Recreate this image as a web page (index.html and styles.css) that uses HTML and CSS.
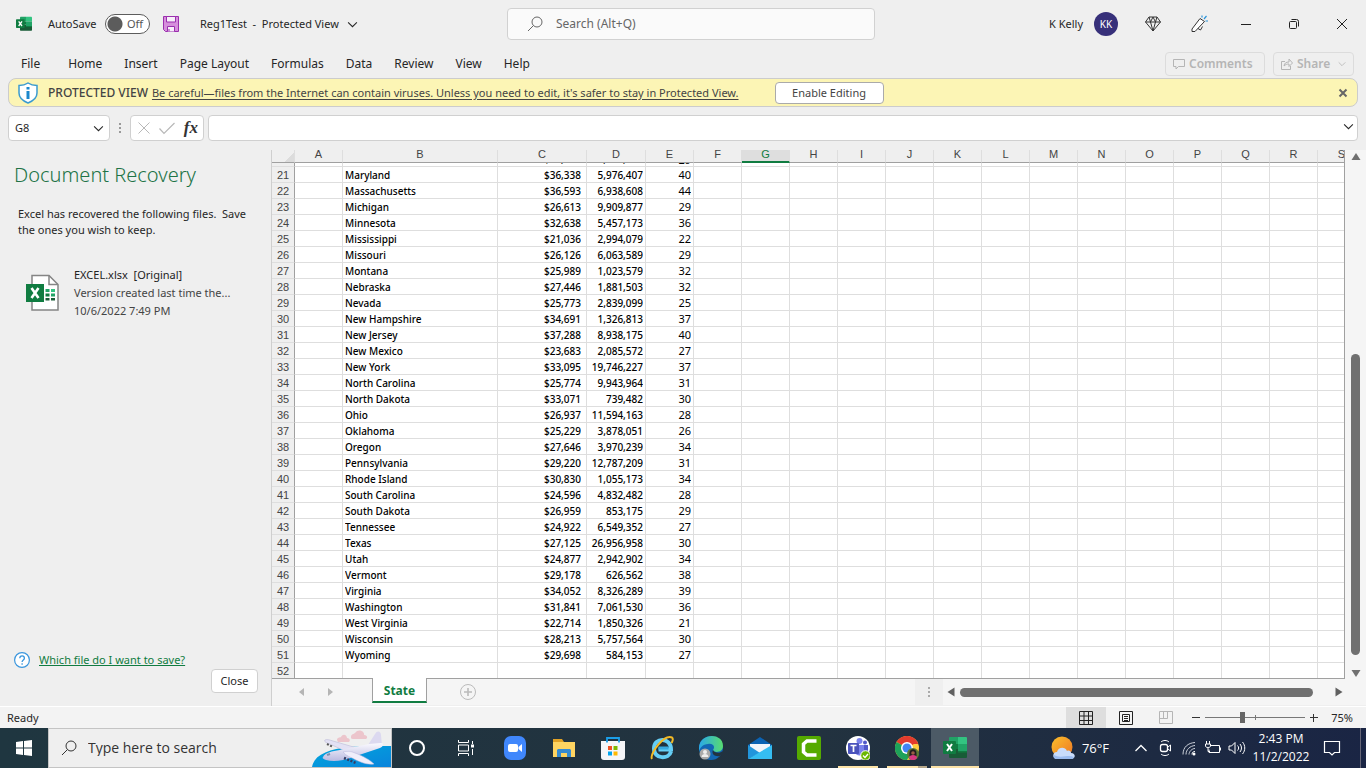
FILE: index.html
```html
<!DOCTYPE html>
<html lang="en">
<head>
<meta charset="utf-8">
<title>Reg1Test - Protected View - Excel</title>
<link rel="stylesheet" href="styles.css">
<script src="sheet.js" defer></script>
</head>
<body>
<svg class="defs" aria-hidden="true">
  <symbol id="excel" viewBox="0 0 24 24">
    <path fill="#21a366" d="M7 1h8v7H6V2a1 1 0 0 1 1-1z"/><path fill="#33c481" d="M15 1h8a1 1 0 0 1 1 1v6h-9z"/>
    <path fill="#107c41" d="M6 8h9v5H6z"/><path fill="#21a366" d="M15 8h9v7h-9z"/>
    <path fill="#185c37" d="M6 13h9v2h9v6a1 1 0 0 1-1 1H7a1 1 0 0 1-1-1z"/><path fill="#107c41" d="M15 15h9v1.500h-9z"/>
    <rect y="5" width="13" height="13" rx="1" fill="#107c41"/>
    <path stroke="#fff" stroke-width="2" d="M4 8l5 7M9 8l-5 7"/>
  </symbol>
  <symbol id="chevron" viewBox="0 0 12 8"><path d="M1 1.500l5 5 5-5" fill="none" stroke="currentColor" stroke-width="1.200"/></symbol>
  <symbol id="lens" viewBox="0 0 16 16"><circle cx="10" cy="6" r="5" fill="none" stroke="currentColor"/><path d="M6.500 9.500L1 15" stroke="currentColor"/></symbol>
</svg>

<header class="titlebar">
  <div class="title-left">
    <svg class="i16"><use href="#excel"/></svg>
    <label class="autosave" for="autosave">AutoSave</label>
    <span class="switch"><input type="checkbox" id="autosave"><span>Off</span></span>
    <button class="plain save" aria-label="Save"><svg class="i16" viewBox="0 0 16 16"><path d="M.5.5h15v15h-13l-2-2z" fill="#d68fdc" stroke="#9b2fae"/><path d="M3.500.5h9V6h-9zM4.500 15.500V10.500h7v5" fill="#f7effa" stroke="#9b2fae"/><path d="M6 13v2.500" stroke="#9b2fae"/></svg></button>
    <button class="plain doc">Reg1Test&nbsp; -&nbsp; Protected View <svg class="chev"><use href="#chevron"/></svg></button>
  </div>
  <div class="search"><svg class="i16"><use href="#lens"/></svg><input type="text" aria-label="Search" placeholder="Search (Alt+Q)"></div>
  <div class="title-right">
    <span>K Kelly</span><button class="avatar">KK</button>
    <button class="plain tool" aria-label="Premium"><svg class="i16" viewBox="0 0 16 16"><path d="M4 1h8l3.500 5L8 15 .5 6zM.5 6h15M4 1l1.500 5L8 15l2.500-9L12 1M8 1L5.500 6M8 1l2.500 5" fill="none" stroke="#333"/></svg></button>
    <button class="plain tool" aria-label="What's new"><svg class="i18" viewBox="0 0 18 18"><path d="M2 14L10 3.500l4.500 3L5 16.500H2zM8 13.500l2.500 1.500 2-3.500" fill="#fff" stroke="#333" stroke-linejoin="round"/><path d="M12 2.500V.5M14 4l2.500-3M15.500 6H18" stroke="#2b93d8" stroke-width="1.200"/></svg></button>
    <button class="plain win" aria-label="Minimize"><svg class="i12" viewBox="0 0 12 12"><path d="M1 6.500h10" stroke="#222"/></svg></button>
    <button class="plain win" aria-label="Restore"><svg class="i12" viewBox="0 0 12 12"><rect x="1.500" y="3.500" width="7" height="7" rx="1" fill="none" stroke="#222"/><path d="M3.500 1.500h5a2 2 0 0 1 2 2v5" fill="none" stroke="#222"/></svg></button>
    <button class="plain win" aria-label="Close window"><svg class="i12" viewBox="0 0 12 12"><path d="M1 1l10 10M11 1L1 11" stroke="#222"/></svg></button>
  </div>
</header>

<nav class="ribbon">
  <button class="plain file">File</button><button class="plain">Home</button><button class="plain">Insert</button><button class="plain">Page Layout</button><button class="plain">Formulas</button><button class="plain">Data</button><button class="plain">Review</button><button class="plain">View</button><button class="plain">Help</button>
  <button class="pill comments" disabled><svg class="i12" viewBox="0 0 12 12"><path d="M.5 1.500h11v7H5.500L3 11V8.500H.5z" fill="none" stroke="currentColor"/></svg>Comments</button>
  <button class="pill share" disabled><svg class="i12" viewBox="0 0 12 12"><path d="M4 3.500H.5v8h9V8M3 8c.5-3 2-4 5-4V1l3.500 4L8 8.500V6C6 6 4.500 6.500 3 8z" fill="none" stroke="currentColor"/></svg>Share<svg class="mini"><use href="#chevron"/></svg></button>
</nav>

<section class="protected">
  <svg class="shield" viewBox="0 0 20 22"><path d="M10 1c3 2 5.500 2.500 9 2.500V11c0 5-4 8-9 10-5-2-9-5-9-10V3.500C4.500 3.500 7 3 10 1z" fill="#fff" stroke="#3b9bd0" stroke-width="1.500"/><path d="M8.500 5h3v2.500h-3zM8.500 9h3v8h-3z" fill="#1b87cc"/></svg>
  <strong>PROTECTED VIEW</strong>
  <a href="#protected">Be careful—files from the Internet can contain viruses. Unless you need to edit, it's safer to stay in Protected View.</a>
  <button class="enable">Enable Editing</button>
  <button class="plain dismiss" aria-label="Dismiss"><svg class="i10" viewBox="0 0 10 10"><path d="M1.500 1.500l7 7M8.500 1.500l-7 7" stroke="#666" stroke-width="2"/></svg></button>
</section>

<section class="formula">
  <div class="namebox"><input type="text" aria-label="Name box" value="G8"><svg class="chev"><use href="#chevron"/></svg></div>
  <svg class="dots" viewBox="0 0 2 10"><path d="M0 0h2v2H0zM0 4h2v2H0zM0 8h2v2H0z" fill="#999"/></svg>
  <div class="fx">
    <button class="plain" aria-label="Cancel"><svg class="i12" viewBox="0 0 12 12"><path d="M.5.5l11 11M11.500.5l-11 11" stroke="#b8b8b8"/></svg></button>
    <button class="plain" aria-label="Enter"><svg class="i16" viewBox="0 0 16 16"><path d="M.5 8.500l4.500 5L15.500 3" fill="none" stroke="#b8b8b8" stroke-width="1.200"/></svg></button>
    <button class="plain fn">fx</button>
  </div>
  <div class="entry"><input type="text" aria-label="Formula bar"><svg class="chev"><use href="#chevron"/></svg></div>
</section>

<main class="work">
  <aside class="recovery">
    <h1>Document Recovery</h1>
    <p class="note">Excel has recovered the following files.&nbsp; Save the ones you wish to keep.</p>
    <button class="plain recovered">
      <svg class="fileicon" viewBox="0 0 34 38"><path d="M6 1.500h17l9 9V36H6z" fill="#fff" stroke="#858585" stroke-width="1.500"/><path d="M23 1.500v9h9" fill="none" stroke="#858585" stroke-width="1.500"/><path fill="#107c41" d="M0 10h18v18H0z"/><path d="M5.500 14l7 10M12.500 14l-7 10" stroke="#fff" stroke-width="2.600"/><path fill="#21a366" d="M19.500 15h4v3h-4zM25 19.500h4v3h-4z"/><path fill="#33c481" d="M25 15h4v3h-4z"/><path fill="#107c41" d="M19.500 19.500h4v3h-4z"/><path fill="#185c37" d="M19.500 24h4v2.500h-4zM25 24h4v2.500h-4z"/></svg>
      <span class="meta"><span class="name">EXCEL.xlsx&nbsp; [Original]</span><span>Version created last time the...</span><span>10/6/2022 7:49 PM</span></span>
    </button>
    <div class="which"><svg class="i16" viewBox="0 0 16 16"><circle cx="8" cy="8" r="7.400" fill="#fff" stroke="#3a96dd" stroke-width="1.200"/><path d="M5.800 6.200c0-3 4.600-3 4.600 0 0 1.700-2.300 1.900-2.300 3.800M8.100 11.200v1.500" fill="none" stroke="#3a96dd" stroke-width="1.300"/></svg><a href="#help">Which file do I want to save?</a></div>
    <button class="close">Close</button>
  </aside>

  <section class="book">
    <div class="view">
      <div class="grid"><table id="sheet">
        <colgroup id="cols"></colgroup>
        <thead><tr id="letters"></tr></thead>
        <tbody id="rows"></tbody>
      </table></div>
      <div class="vbar">
        <svg class="arrow" viewBox="0 0 10 8"><path d="M5 0l4.500 7h-9z" fill="#707070"/></svg>
        <div class="vtrack"><div class="vthumb"></div></div>
        <svg class="arrow" viewBox="0 0 10 8"><path d="M5 8L.5 1h9z" fill="#707070"/></svg>
      </div>
    </div>
    <div class="tabs">
      <div class="tabnav"><svg viewBox="0 0 5 8"><path d="M5 0v8L0 4z" fill="#b5b5b5"/></svg><svg viewBox="0 0 5 8"><path d="M0 0v8l5-4z" fill="#b5b5b5"/></svg></div>
      <button class="tab">State</button>
      <button class="plain add" aria-label="New sheet"><svg class="i16" viewBox="0 0 16 16"><circle cx="8" cy="8" r="7.500" fill="none" stroke="#bbb"/><path d="M8 4v8M4 8h8" stroke="#bbb" stroke-width="1.600"/></svg></button>
      <div class="grip"><svg class="dots" viewBox="0 0 2 10"><path d="M0 0h2v2H0zM0 4h2v2H0zM0 8h2v2H0z" fill="#aaa"/></svg></div>
      <div class="hbar"><svg viewBox="0 0 8 10"><path d="M7.500 .5v9L.5 5z" fill="#606060"/></svg><div class="htrack"><div class="hthumb"></div></div><svg viewBox="0 0 8 10"><path d="M.5.5v9l7-4.500z" fill="#606060"/></svg></div>
    </div>
  </section>
</main>

<footer class="status">
  <span class="ready">Ready</span>
  <button class="plain mode on" aria-label="Normal"><svg class="i14" viewBox="0 0 14 14"><path d="M.5.5h13v13H.5zM.5 5h13M.5 9.500h13M5 .5v13M9.500.5v13" fill="none" stroke="#222"/></svg></button>
  <button class="plain mode" aria-label="Page layout"><svg class="i14" viewBox="0 0 14 14"><path d="M.5.500h13v13H.5zM3.500 3.500h7v7h-7zM5 5.500h4M5 7.500h4M5 9.500h4" fill="none" stroke="#222"/></svg></button>
  <button class="plain mode" aria-label="Page break"><svg class="i14" viewBox="0 0 14 14"><path d="M.5.5h13v12H.5zM.5 7.500h8V.5M4.500 .5v7" fill="none" stroke="#b5b5b5"/></svg></button>
  <button class="plain zoom" aria-label="Zoom out"><svg class="i8" viewBox="0 0 8 8"><path d="M0 3.500h8" stroke="#333"/></svg></button>
  <input class="slider" type="range" aria-label="Zoom" min="0" max="100" value="37">
  <button class="plain zoom" aria-label="Zoom in"><svg class="i8" viewBox="0 0 8 8"><path d="M0 3.500h8M3.500 0v8" stroke="#333"/></svg></button>
  <span class="pct">75%</span>
</footer>

<div class="taskbar">
  <button class="plain start" aria-label="Start"><svg class="i16" viewBox="0 0 16 16"><path d="M0 2l7-1v6.500H0zM8 1l8-1v7.500H8zM0 8.500h7V15l-7-1zM8 8.500h8V16l-8-1z" fill="#fff"/></svg></button>
  <div class="tasksearch">
    <svg class="i16"><use href="#lens"/></svg><input type="text" aria-label="Type here to search" placeholder="Type here to search">
    <svg class="plane" viewBox="0 0 80 38">
      <defs><linearGradient id="sea" x2="1" y2="1"><stop stop-color="#00a8dc"/><stop offset="1" stop-color="#0a84dc"/></linearGradient><linearGradient id="hull" x2="0" y2="1"><stop stop-color="#fbfaff"/><stop offset="1" stop-color="#b9b9e0"/></linearGradient></defs>
      <path d="M1 38c2-12 16-18 38-20 14-1 28-1 41-1v21z" fill="url(#sea)"/>
      <path d="M26 11c0-3 3-2 4-3 2-4 6-2 6 1 3 0 4 4 1 4H27zM40 8c0-3 3-3 4-4 3-5 10-2 9 2 4 0 4 4 1 4H42c-2 0-2-1-2-2z" fill="#ecc5cc"/>
      <path d="M14 11c2-1 5 0 8 1l24 7-10 4c-7-3-14-7-20-9-2-1-3-2-2-3z" fill="#e3e1f4" stroke="#b3b0d3" stroke-width=".5"/>
      <path d="M57 16l7-11c2-4 6-3 6 1l1 11-8 3z" fill="#dcd9f0"/>
      <path d="M12 28c2-4 9-6 17-7l29-6 12-1c3 0 3 3-1 5L42 28c-10 4-20 5-27 3-3-1-4-2-3-3z" fill="url(#hull)"/>
      <path d="M32 23c4-1 8-1 12 1 8 3 15 7 19 11-5 1-12-1-18-4-5-3-10-4-13-8z" fill="#f0eefb" stroke="#b9b6da" stroke-width=".5"/>
      <path d="M33 29l12 5" stroke="#333c63" stroke-width="2.500" stroke-dasharray="2 1.500"/><path d="M16 15l6 3" stroke="#555" stroke-width="2" stroke-dasharray="2 1.500"/><path d="M16 26l3-1" stroke="#7f8fae" stroke-width="2"/>
    </svg>
  </div>
  <div class="apps">
    <button class="plain" aria-label="Cortana"><svg class="i16" viewBox="0 0 16 16"><circle cx="8" cy="8" r="7" fill="none" stroke="#fff" stroke-width="2"/></svg></button>
    <button class="plain" aria-label="Task view"><svg class="i16" viewBox="0 0 16 16"><path d="M.5 0v2.500h10V0M.5 5h10v6H.5zM.5 16v-2.500h10V16M14.500 1v3M14.500 9v6" fill="none" stroke="#fff"/><path d="M13 4.500h3v3h-3z" fill="#fff"/></svg></button>
    <button class="plain" aria-label="Zoom"><svg class="i24" viewBox="0 0 24 24"><rect x="1" width="22" height="24" rx="7" fill="#4087fc"/><rect x="5" y="8" width="10" height="8" rx="2" fill="#fff"/><path d="M15.500 11L19 8v8l-3.500-3z" fill="#fff"/></svg></button>
    <button class="plain" aria-label="File Explorer"><svg class="i24" viewBox="0 0 24 24"><path d="M1 3h9l2 3h11v15H1z" fill="#e2a226"/><path d="M1 6h22v15H1z" fill="#ffd461"/><path d="M5 21v-7l1-1h12l1 1v7h-4v-4H9v4z" fill="#368bd2"/></svg></button>
    <button class="plain" aria-label="Microsoft Store"><svg class="i24" viewBox="0 0 24 24"><path d="M0 5h24v16a3 3 0 0 1-3 3H3a3 3 0 0 1-3-3z" fill="#f5f5f7"/><path d="M7 10h4v4H7z" fill="#f25022"/><path d="M12.500 10h4v4h-4z" fill="#7fba00"/><path d="M7 15.500h4v4H7z" fill="#00a4ef"/><path d="M12.500 15.500h4v4h-4z" fill="#ffb900"/><path d="M6 6.500V2h12v4.500" fill="none" stroke="#1b9fe8" stroke-width="1.800"/></svg></button>
    <button class="plain" aria-label="Internet Explorer"><svg class="i24" viewBox="0 0 24 24"><path d="M21 15.500c-2 8-17 8-17-3C4 1 21 1 21 13.500H8.500" fill="none" stroke="#65cef5" stroke-width="4"/><path d="M8.500 12h10" stroke="#35a9e0" stroke-width="3"/><path d="M2 23C-1 18 14-2 22 1.500c1.500 1 .5 4-.5 5.500" fill="none" stroke="#f4ba25" stroke-width="2"/></svg></button>
    <button class="plain" aria-label="Edge"><svg class="i24" viewBox="0 0 24 24"><defs><linearGradient id="edge" x2="1"><stop stop-color="#2aa8e8"/><stop offset="1" stop-color="#58dc70"/></linearGradient></defs><circle cx="12" cy="12" r="12" fill="#1267b4"/><path d="M0 12C0-3 24-4 24 10c0 7-9 7-10 4 3-4-1-7-5-6-5 0-9 4-9 9z" fill="url(#edge)"/><path d="M14 14c1 3 7 4 9.500 1l.5 3-3 2c-5 1-9-2-7-6z" fill="#223340"/><circle cx="6" cy="18" r="5.500" fill="#aaa"/><circle cx="6" cy="16" r="2" fill="#eee"/><path d="M2.500 21c0-4 7-4 7 0z" fill="#eee"/></svg></button>
    <button class="plain" aria-label="Mail"><svg class="i24" viewBox="0 0 24 24"><path d="M0 9l12-8 12 8v5H0z" fill="#0b63b3"/><path d="M2 8h20v10H2z" fill="#f1f5fa"/><path d="M0 9l12 8L0 23z" fill="#2195dc"/><path d="M24 9L0 23h24z" fill="#35bdf2"/></svg></button>
    <button class="plain" aria-label="Camtasia"><svg class="i24" viewBox="0 0 24 24"><rect width="24" height="24" rx="2" fill="#55aa00"/><path d="M19.500 5H10L6.500 8v8l3.500 3h9.500" fill="none" stroke="#fff" stroke-width="3.500"/></svg></button>
    <button class="plain running" aria-label="Teams"><svg class="i24" viewBox="0 0 24 24"><circle cx="12" cy="12" r="12" fill="#fff"/><circle cx="19" cy="6.500" r="2" fill="#5059c9"/><circle cx="13.500" cy="5" r="3" fill="#7b83eb"/><path d="M17 9h5v6c0 2-2 4-4 3z" fill="#5059c9"/><path d="M9 9h9v6c0 6-9 6-9 0z" fill="#7b83eb"/><rect x="2" y="7" width="11" height="11" rx="1" fill="#4b53bc"/><path d="M4.500 9.500h6M7.500 9.500V16" stroke="#fff" stroke-width="1.700"/><circle cx="19.500" cy="19.500" r="4.800" fill="#6bb700" stroke="#fff"/><path d="M17 19.500l2 2 3-3.500" fill="none" stroke="#fff" stroke-width="1.300"/></svg></button>
    <button class="plain running stacked" aria-label="Chrome"><svg class="i24" viewBox="0 0 24 24"><circle cx="12" cy="12" r="12" fill="#ffcd40"/><path d="M12 12L1.600 6A12 12 0 0 1 22.400 6z" fill="#e33b2e"/><path d="M12 12L1.600 6A12 12 0 0 0 12 24l5-9z" fill="#1da25a"/><path d="M12 6h10.400l.8 2H12z" fill="#e33b2e"/><circle cx="12" cy="12" r="6" fill="#fff"/><circle cx="12" cy="12" r="4.500" fill="#4285f4"/><circle cx="18" cy="18" r="6" fill="#5b7b32"/><path d="M14.500 20v-3c0-5 7-5 7 0v3z" fill="#211c20"/><circle cx="18" cy="17" r="1.800" fill="#9a5d45"/><path d="M14 22c0-4 8-4 8 0-2 3-6 3-8 0z" fill="#d63980"/></svg></button>
    <button class="plain active" aria-label="Excel"><svg class="i24"><use href="#excel"/></svg></button>
  </div>
  <div class="tray">
    <button class="plain weather"><svg class="i24" viewBox="0 0 24 24"><defs><linearGradient id="sun" x2="1" y2="1"><stop stop-color="#fbc02c"/><stop offset="1" stop-color="#ed7524"/></linearGradient></defs><circle cx="11" cy="11" r="10.500" fill="url(#sun)"/><path d="M6 23c-5 0-5-7 0-7 1-5 8-6 10-1 2-1 4 0 4 2 5 0 5 6 0 6z" fill="#c9dcfb"/><path d="M6 23c-3 0-4-2-3-4 7 4 14-1 20 2-1 2-2 2-3 2z" fill="#9bbcf0"/></svg>76°F</button>
    <button class="plain" aria-label="Show hidden icons"><svg class="i12" viewBox="0 0 12 12"><path d="M.5 9L6 3.500 11.500 9" fill="none" stroke="#fff" stroke-width="1.300"/></svg></button>
    <button class="plain" aria-label="Meet now"><svg class="i16" viewBox="0 0 16 16"><rect x="3.500" y="4.500" width="7" height="7" rx="2" fill="none" stroke="#fff" stroke-width="1.300"/><path d="M11 7l2.500-2v6L11 9M4 2c2-2 6-2 8 0M4 14c2 2 6 2 8 0" fill="none" stroke="#fff"/></svg></button>
    <button class="plain" aria-label="Network"><svg class="i16" viewBox="0 0 16 16"><path d="M2 14.500C2 7 7 3 14 2.500M5 14.500c0-5 4-8.500 9-9M8 14.500c0-3 3-6 6-6" fill="none" stroke="#ccd1da"/><path d="M11 14.500c0-2 1-3 3-3" fill="none" stroke="#fff"/><circle cx="13" cy="14" r="1.500" fill="#fff"/></svg></button>
    <button class="plain" aria-label="Battery"><svg class="i16" viewBox="0 0 16 16"><path d="M6 5.500h8.500v7H4v-3M15.500 7.500v3M1.500 1v3M4.500 1v3M.5 4h5v2c0 2-5 2-5 0zM3 8v3.500h2" fill="none" stroke="#fff"/></svg></button>
    <button class="plain" aria-label="Volume"><svg class="i18" viewBox="0 0 18 16"><path d="M1 6h2.500L7 2.500v11L3.500 10H1zM9.500 5.500c1.500 1.500 1.500 3.500 0 5M12 4c2 2.500 2 5.500 0 8M14.500 2c3 3.500 3 8.500 0 12" fill="none" stroke="#fff"/></svg></button>
    <button class="plain clock"><span>2:43 PM</span><span>11/2/2022</span></button>
    <button class="plain notify" aria-label="Notifications"><svg class="i18" viewBox="0 0 18 18"><path d="M1.500 2.500h15v11h-5L9 16l-2.500-2.500h-5z" fill="none" stroke="#fff" stroke-width="1.200"/></svg></button>
  </div>
</div>
</body>
</html>
```
FILE: sheet.js
```js
const data = [
  ["Maine", "$26,824", "1,330,089", 29],
  ["Maryland", "$36,338", "5,976,407", 40],
  ["Massachusetts", "$36,593", "6,938,608", 44],
  ["Michigan", "$26,613", "9,909,877", 29],
  ["Minnesota", "$32,638", "5,457,173", 36],
  ["Mississippi", "$21,036", "2,994,079", 22],
  ["Missouri", "$26,126", "6,063,589", 29],
  ["Montana", "$25,989", "1,023,579", 32],
  ["Nebraska", "$27,446", "1,881,503", 32],
  ["Nevada", "$25,773", "2,839,099", 25],
  ["New Hampshire", "$34,691", "1,326,813", 37],
  ["New Jersey", "$37,288", "8,938,175", 40],
  ["New Mexico", "$23,683", "2,085,572", 27],
  ["New York", "$33,095", "19,746,227", 37],
  ["North Carolina", "$25,774", "9,943,964", 31],
  ["North Dakota", "$33,071", "739,482", 30],
  ["Ohio", "$26,937", "11,594,163", 28],
  ["Oklahoma", "$25,229", "3,878,051", 26],
  ["Oregon", "$27,646", "3,970,239", 34],
  ["Pennsylvania", "$29,220", "12,787,209", 31],
  ["Rhode Island", "$30,830", "1,055,173", 34],
  ["South Carolina", "$24,596", "4,832,482", 28],
  ["South Dakota", "$26,959", "853,175", 29],
  ["Tennessee", "$24,922", "6,549,352", 27],
  ["Texas", "$27,125", "26,956,958", 30],
  ["Utah", "$24,877", "2,942,902", 34],
  ["Vermont", "$29,178", "626,562", 38],
  ["Virginia", "$34,052", "8,326,289", 39],
  ["Washington", "$31,841", "7,061,530", 36],
  ["West Virginia", "$22,714", "1,850,326", 21],
  ["Wisconsin", "$28,213", "5,757,564", 30],
  ["Wyoming", "$29,698", "584,153", 27],
  ["", "", "", ""]
];
const firstRow = 20;
const letters = "ABCDEFGHIJKLMNOPQRS".split("");
const kinds = { B: "state", C: "income", D: "people", E: "rate" };

const cols = document.getElementById("cols");
cols.innerHTML = '<col class="c-num">' + letters.map(l => `<col class="c-${kinds[l] || "std"}">`).join("");

document.getElementById("letters").innerHTML = '<th class="corner"></th>' +
  letters.map(l => `<th scope="col"${l === "G" ? ' class="current"' : ""}>${l}</th>`).join("");

document.getElementById("rows").innerHTML = data.map((row, i) => {
  const cells = letters.map((l, c) => {
    const value = c >= 1 && c <= 4 ? row[c - 1] : "";
    return `<td class="${kinds[l] || ""}"><div>${value}</div></td>`;
  }).join("");
  return `<tr${i === 0 ? ' class="cut"' : ""}><th scope="row"><div>${firstRow + i}</div></th>${cells}</tr>`;
}).join("");
```
FILE: styles.css
```css
* { box-sizing: border-box; }
body { margin: 0; height: 100vh; display: flex; flex-direction: column; overflow: hidden; background: #efefef; color: #262626; font: 11px/16px "Noto Sans", "Open Sans", sans-serif; }
button, input { font: inherit; color: inherit; }
svg { display: block; flex: none; }
.defs { position: absolute; width: 0; height: 0; }
.plain { border: 0; background: none; padding: 0; display: flex; align-items: center; justify-content: center; }
.i8 { width: 8px; height: 8px; }
.i10 { width: 10px; height: 10px; }
.i12 { width: 12px; height: 12px; }
.i14 { width: 14px; height: 14px; }
.i16 { width: 16px; height: 16px; }
.i18 { width: 18px; height: 18px; }
.i24 { width: 24px; height: 24px; }
.chev { width: 11px; height: 7px; }
.mini { width: 8px; height: 6px; }
input { border: 0; background: none; outline: 0; min-width: 0; padding: 0; }

.titlebar { flex: none; height: 48px; display: grid; grid-template-columns: 507fr 368fr 491fr; align-items: center; }
.title-left { display: flex; align-items: center; padding-left: 16px; white-space: nowrap; }
.autosave { margin-left: 16px; width: 57px; }
.switch { display: grid; width: 45px; height: 20px; align-items: center; }
.switch > * { grid-area: 1 / 1; }
.switch input { appearance: none; margin: 0; width: 45px; height: 20px; border: 1px solid #5c5c5c; border-radius: 10px; background: radial-gradient(circle at 9px 9px, #5c5c5c 7px, #fff 8px); }
.switch span { padding-left: 22px; color: #555; pointer-events: none; }
.save { margin: 0 21px 0 13px; }
.doc { gap: 8px; }
.search { display: flex; align-items: center; gap: 13px; height: 32px; padding-left: 19px; border: 1px solid #d1d1d1; border-radius: 4px; background: #fafafa; color: #666; font-size: 12px; }
.search input { flex: 1; }
::placeholder { color: inherit; opacity: 1; }
.title-right { display: flex; align-items: center; justify-content: flex-end; white-space: nowrap; }
.avatar { width: 24px; height: 24px; margin: 0 12px 0 11px; padding: 0; border: 0; border-radius: 50%; background: #37307a; color: #fff; font-size: 10px; }
.tool { width: 46px; height: 32px; }
.win { width: 48px; height: 32px; }

.ribbon { flex: none; height: 30px; display: flex; align-items: center; gap: 22px; padding: 1px 12px 0 21px; font-size: 12px; }
.file { margin-right: 6px; }
.pill { display: flex; align-items: center; gap: 4px; height: 24px; padding: 0 7px; border: 1px solid #dcdcdc; border-radius: 4px; background: none; color: #b5b5b5; font-weight: 600; }
.comments { margin-left: auto; width: 100px; }
.share { width: 81px; margin-left: -14px; }
.share .mini { margin-left: auto; }

.protected { flex: none; height: 29px; display: flex; align-items: center; margin: 0 8px; padding: 0 9px; border: 1px solid #ccc; border-radius: 8px; background: #fcf5b5; color: #444; white-space: nowrap; }
.shield { width: 20px; height: 22px; }
.protected strong { margin: 0 4px 0 10px; font-weight: 500; font-size: 12px; }
.protected a { color: inherit; text-underline-offset: 2px; }
.enable { margin-left: 36px; width: 109px; height: 22px; padding: 0; border: 1px solid #aaa; border-radius: 4px; background: #fff; }
.dismiss { margin-left: auto; }

.formula { flex: none; height: 43px; display: flex; align-items: flex-start; padding: 8px 8px 0; }
.namebox, .fx, .entry { display: flex; align-items: center; height: 26px; border: 1px solid #d0d0d0; border-radius: 4px; background: #fff; }
.namebox { width: 102px; padding: 0 5px 0 6px; }
.namebox input { flex: 1; }
.dots { width: 2px; height: 10px; margin: 8px 9px; }
.fx { width: 74px; justify-content: space-between; padding: 0 5px 0 7px; }
.fn { font: italic bold 17px/20px "Liberation Serif", serif; color: #333; }
.entry { flex: 1; margin-left: 4px; padding: 0 3px 4px 8px; }
.entry input { flex: 1; }

.work { flex: 1; min-height: 0; display: flex; }
.recovery { flex: none; width: 272px; display: flex; flex-direction: column; padding: 11px 13px 13px 14px; border-right: 1px solid #cfcfcf; }
.recovery h1 { margin: 0; font-size: 20px; line-height: 28px; font-weight: 300; color: #217346; white-space: nowrap; }
.note { margin: 17px 0 0 4px; }
.recovered { margin: 28px 0 0 12px; gap: 14px; justify-content: flex-start; text-align: left; color: #444; }
.fileicon { width: 34px; height: 38px; }
.meta { display: grid; line-height: 18px; white-space: nowrap; }
.name { color: #222; }
.which { display: flex; align-items: center; gap: 9px; margin: auto 0 1px; }
.which a { color: #107c41; }
.close { align-self: flex-end; width: 47px; height: 24px; padding: 0; border: 1px solid #d0d0d0; border-radius: 4px; background: #fff; }

.book { flex: 1; min-width: 0; display: flex; flex-direction: column; background: #f5f5f5; }
.view { flex: 1; min-height: 0; display: flex; }
.grid { flex: 1; min-width: 0; overflow: hidden; border-right: 1px solid #a0a0a0; border-bottom: 1px solid #a0a0a0; background: #fff; }
#sheet { table-layout: fixed; width: 1094px; border-collapse: separate; border-spacing: 0; line-height: 17px; color: #000; }
.c-num { width: 23px; }
.c-std, .c-rate { width: 48px; }
.c-state { width: 155px; }
.c-income { width: 89px; }
.c-people { width: 59px; }
#sheet th, #sheet td { padding: 0; border-right: 1px solid #dedede; border-bottom: 1px solid #dedede; }
#sheet th { background: #efefef; color: #444; font: 11px/17px "Liberation Sans", sans-serif; }
#sheet thead th { height: 13px; line-height: 8px; vertical-align: top; border-bottom-color: #a0a0a0; }
#sheet tbody th { border-right-color: #a0a0a0; text-align: center; }
#sheet thead .current { background: #dedede; color: #107c41; border-bottom: 2px solid #107c41; }
#sheet .corner { background: linear-gradient(135deg, #efefef 72%, #dcdcdc 72%); border-right-color: #dedede; }
#sheet td > div, #sheet th > div { height: 15px; overflow: hidden; white-space: nowrap; }
#sheet .cut div { height: 3px; line-height: 13px; display: flex; align-items: flex-end; justify-content: flex-end; }
#sheet .cut th div { justify-content: center; }
#sheet .cut .state div { justify-content: flex-start; }
#sheet .state { padding-left: 2px; font-weight: 500; }
.state, .income, .people { font-size: 10px; }
.income, .people, .rate { text-align: right; }
#sheet .income { padding-right: 5px; font-weight: 500; }
#sheet .people { padding-right: 2px; font-weight: 500; }
#sheet .rate { padding-right: 2px; line-height: 15px; }
.vbar { width: 21px; display: flex; flex-direction: column; align-items: center; padding: 3px 0 2px; }
.arrow { width: 10px; height: 8px; }
.vtrack { flex: 1; display: flex; flex-direction: column; justify-content: flex-end; padding-bottom: 14px; }
.vthumb { width: 9px; height: 61%; border-radius: 5px; background: #707070; }
.tabs { flex: none; height: 27px; display: flex; align-items: center; border-bottom: 1px solid #efefef; }
.tabnav { width: 100px; display: flex; gap: 24px; padding-left: 27px; }
.tabnav svg { width: 5px; height: 8px; }
.tab { align-self: flex-start; width: 55px; height: 25px; margin-top: -1px; padding: 2px 0 0; border: solid #a0a0a0; border-width: 0 1px; border-bottom: 2px solid #107c41; background: #fff; color: #107c41; font-size: 12px; font-weight: 700; }
.add { margin-left: 33px; }
.grip { margin-left: auto; width: 28px; align-self: stretch; background: #efefef; display: flex; align-items: center; justify-content: center; }
.hbar { flex: 0 1 404px; display: flex; align-items: center; padding: 0 4px; margin-right: 19px; }
.hbar svg { width: 8px; height: 10px; }
.htrack { flex: 1; padding: 0 22px 0 5px; }
.hthumb { height: 9px; border-radius: 5px; background: #707070; }

.status { flex: none; height: 22px; display: flex; align-items: center; border-top: 1px solid #fff; background: #f3f3f3; padding-right: 13px; }
.ready { margin: 0 auto 0 7px; }
.mode { width: 40px; height: 21px; }
.on { background: #dedede; }
.zoom { width: 18px; height: 20px; }
.mode + .zoom { margin-left: 1px; }
.slider { appearance: none; width: 100px; height: 12px; margin: 0; background: linear-gradient(#777, #777) 50px 50% / 1px 5px no-repeat, linear-gradient(#777, #777) 0 50% / 100% 1px no-repeat; }
.slider::-webkit-slider-thumb { appearance: none; width: 5px; height: 11px; background: #666; }
.pct { margin-left: 8px; }

.taskbar { flex: none; height: 40px; display: flex; background: linear-gradient(90deg, #1f3640, #22323f 60%, #1a2544); color: #fff; }
.taskbar .start { width: 48px; }
.tasksearch { width: 344px; display: flex; align-items: center; gap: 11px; padding-left: 12px; border: 1px solid #c4c4c4; background: #efefef; color: #333; font-family: "Open Sans", sans-serif; font-size: 14px; }
.tasksearch input { flex: 1; }
.plane { width: 80px; height: 38px; }
.apps { display: flex; }
.apps button { width: 49px; height: 40px; }
.apps .active { width: 48px; background: linear-gradient(#fde3a7, #fde3a7) 0 100% / 100% 2px no-repeat #4c5a66; }
.apps .running { background: linear-gradient(#fde3a7, #fde3a7) 50% 100% / 40px 2px no-repeat; }
.apps .stacked { background-image: linear-gradient(90deg, #fde3a7 31px, #b7a88a 31px); }
.tray { margin-left: auto; display: flex; padding-right: 5px; font: 12px/18px "Open Sans", sans-serif; }
.tray button { width: 24px; }
.tray .weather { width: 58px; gap: 7px; margin-right: 20px; font-size: 13px; }
.tray .clock { width: 64px; flex-direction: column; white-space: nowrap; }
.tray .notify { width: 48px; justify-content: flex-start; padding-left: 10px; border-right: 1px solid #667; }
```
